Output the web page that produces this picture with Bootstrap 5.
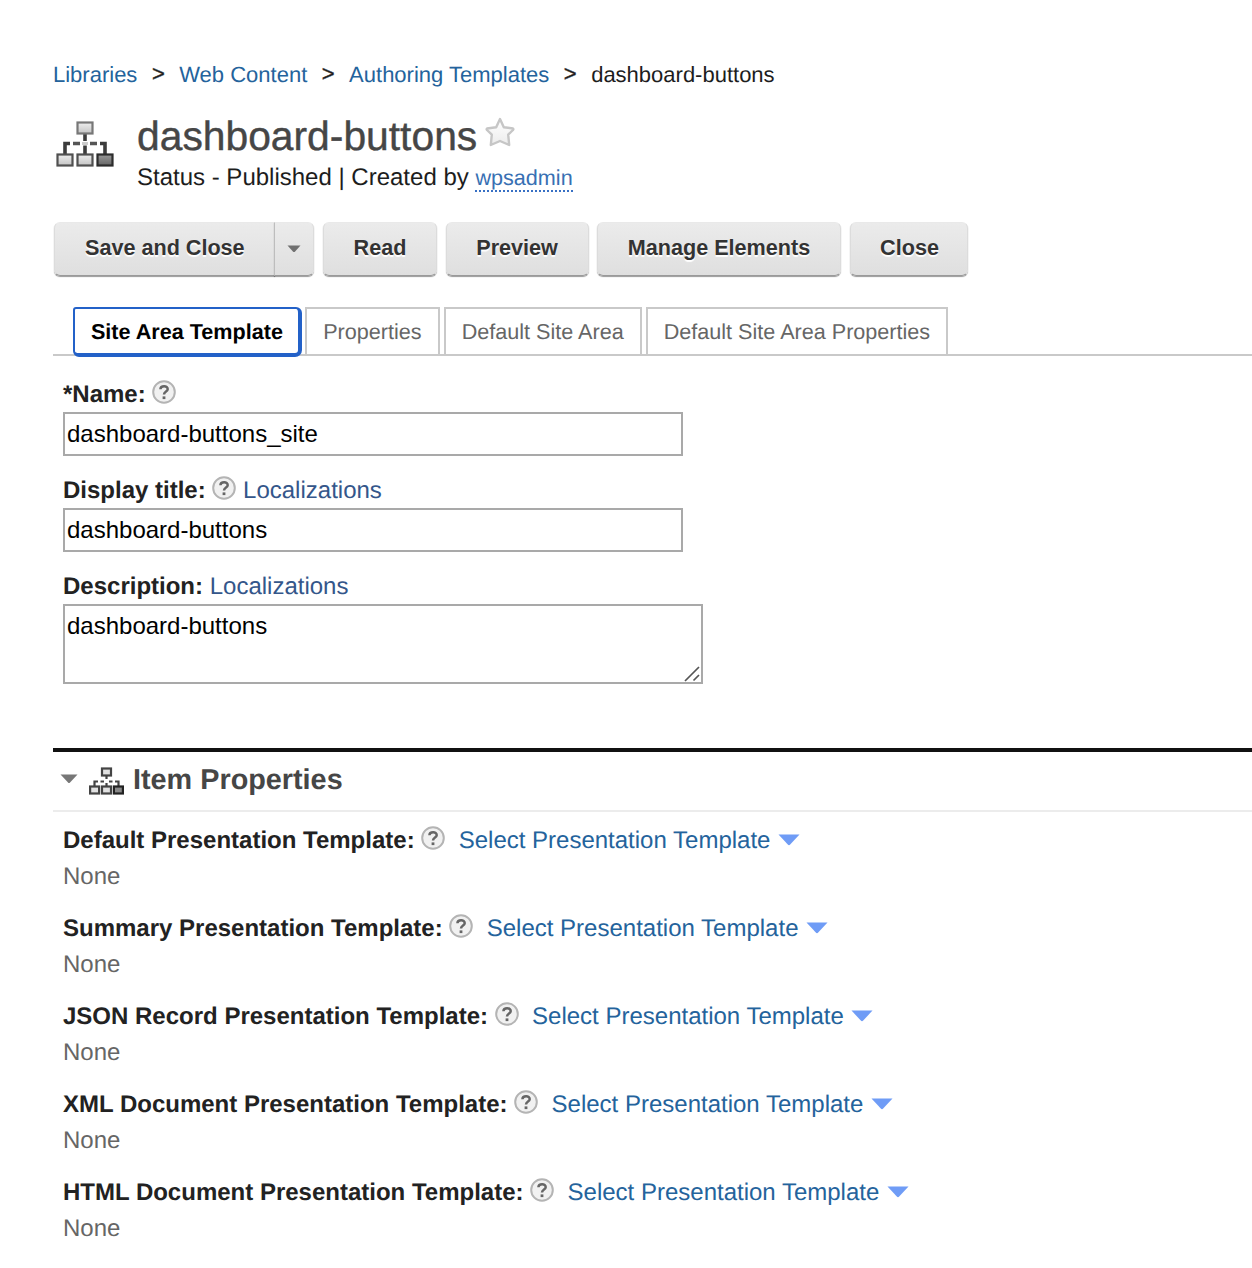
<!DOCTYPE html>
<html lang="en">
<head>
<meta charset="utf-8">
<meta name="viewport" content="width=device-width, initial-scale=1">
<title>dashboard-buttons</title>
<link href="https://cdn.jsdelivr.net/npm/bootstrap@5.3.0/dist/css/bootstrap.min.css" rel="stylesheet">
<style>
body{font-family:"Liberation Sans",Arial,sans-serif;font-size:24px;line-height:36px;color:#1d1d1d;background:#fff;text-rendering:geometricPrecision;overflow-x:hidden}
a{color:#24639c;text-decoration:none}
svg{display:block;flex:none}
.page-body{padding:61px 0 0 53px}
.crumbs{--bs-breadcrumb-divider:'>';font-size:22px;line-height:28px;margin:0;flex-wrap:nowrap}
.crumbs .breadcrumb-item+.breadcrumb-item{padding-left:14.5px}
.crumbs .breadcrumb-item+.breadcrumb-item::before{padding-right:14.5px;color:#1d1d1d;position:relative;top:-1px;-webkit-text-stroke:.4px #1d1d1d}
.crumbs .breadcrumb-item.active{color:#1d1d1d}
.item-head{padding-top:22px}
.item-icon{margin:10px 23px 0 3px}
.item-title{font-size:40.8px;line-height:50px;font-weight:400;color:#464646;-webkit-text-stroke:.4px #464646;margin:0}
.star{margin:-9px 0 0 7px}
.item-status{line-height:30px;margin-top:2px}
.author{font-size:21.6px;color:#3870b3;border-bottom:2px dotted #3870c4}
.toolbar{padding:29px 0 0 1px;gap:8.7px}
.tool{font-size:21.6px;font-weight:700;line-height:26px;color:#333;padding:12px 29.6px 14px;border:1px solid #dcdcdc;border-top-color:#e9e9e9;border-bottom-color:#9a9a9a;border-radius:6px;background:linear-gradient(#ebebeb,#dfdfdf);box-shadow:0 1px 1px rgba(0,0,0,.4);text-shadow:0 2px 1px #fff;white-space:nowrap}
.tool:last-child{padding-right:28.4px}
.split-group .tool:first-child{padding-left:30px;padding-right:30.4px;border-right:0}
.split-group .tool.arrow{padding:0 12px 0 12.3px;border-left:1px solid #bdbdbd;margin-left:0}
.tabs{margin-top:31px;padding-left:20px;height:49px;border-bottom:2px solid #c9c9c9;font-size:21.6px;line-height:44px;flex-wrap:nowrap;gap:4px}
.tabs .nav-link{height:49px;padding:1px 16px 0;border:2px solid #c9c9c9;border-radius:0;color:#666;background:#fff;white-space:nowrap}
.tabs .nav-link.active{height:50px;border:2px solid #2361c8;border-right-width:4px;border-bottom-width:4px;border-radius:3px 6px 7px 6px;color:#000;font-weight:700;padding:1px 15.5px 0 15.9px;margin-right:-1.2px}
.fields{padding:20px 0 0 10px}
.label-row{height:36px;padding-top:2px;gap:6.7px;white-space:nowrap}
.label-row strong{color:#222}
.label-row svg.help{margin-top:-6px}
.loc{color:#34568a}
.box-in{font-size:24px;line-height:30px;color:#000;border:2px solid #a9a9a9;border-radius:0;padding:5px 2px;width:620px;height:44px;display:block}
.field{height:96px}
.area-wrap{width:640px;height:80px}
textarea.box-in{width:640px;height:80px;resize:none;overflow:hidden;padding-top:5px}
.grip{right:3px;bottom:2px}
.section-bar{margin-top:64px;border-top:4px solid #111;border-bottom:2px solid #ececec;height:64px}
.section-bar h2{font-size:28.8px;font-weight:700;line-height:36px;color:#464646;margin:0 0 2px 9px}
.section-caret{margin:-5px 11px 0 7px}
.props{padding:10px 0 0 10px}
.prop{height:88px}
.none-text{color:#666;margin-top:1px}
.label-row .pick{margin-left:6.7px}
.label-row svg.down{margin:-2px 0 0 .6px}
</style>
</head>
<body>
<svg width="0" height="0" class="position-absolute">
 <defs>
  <linearGradient id="lightBox" x1="0" y1="0" x2="0" y2="1"><stop offset="0" stop-color="#eee"/><stop offset="1" stop-color="#c4c4c4"/></linearGradient>
  <linearGradient id="darkBox" x1="0" y1="0" x2="0" y2="1"><stop offset="0" stop-color="#999"/><stop offset="1" stop-color="#666"/></linearGradient>
  <linearGradient id="starFill" x1="0" y1="0" x2="0" y2="1"><stop offset="0" stop-color="#fff"/><stop offset="1" stop-color="#ececec"/></linearGradient>
  <symbol id="help" viewBox="0 0 24 24"><circle cx="12" cy="12" r="10.8" fill="#f1f1f1" stroke="#b4b4b4" stroke-width="2"/><path d="M8.4 9.2C8.6 5.2 15.9 5.2 15.7 9.3C15.6 11.6 12 11.5 12 14.5" fill="none" stroke="#666" stroke-width="2.5"/><rect x="10.6" y="16.4" width="2.8" height="2.7" fill="#666"/></symbol>
  <symbol id="down" viewBox="0 0 22 12"><path d="M0.5 .5H21.5L12.2 10.6Q11 11.8 9.8 10.6Z" fill="#6f9cf6"/></symbol>
 </defs>
</svg>
<main class="page-body">
 <nav><ol class="breadcrumb crumbs">
  <li class="breadcrumb-item"><a href="#">Libraries</a></li>
  <li class="breadcrumb-item"><a href="#">Web Content</a></li>
  <li class="breadcrumb-item"><a href="#">Authoring Templates</a></li>
  <li class="breadcrumb-item active">dashboard-buttons</li>
 </ol></nav>
 <header class="item-head d-flex">
  <svg class="item-icon" width="58" height="46" viewBox="0 0 58 46"><path d="M29 12V20M29 24.5V33M9 33V22.5H14M49 33V22.5H44" fill="none" stroke="#3c3c3c" stroke-width="3.6"/><path d="M17 22.5H24M34 22.5H41" stroke="#555" stroke-width="3.6"/><path d="M26 22.5H32" stroke="#ccc" stroke-width="3"/><g fill="url(#lightBox)" stroke="#505050" stroke-width="2.2"><rect x="21.5" y="1.5" width="15" height="11" stroke="#777"/><rect x="1.5" y="33.5" width="15" height="11"/><rect x="21.5" y="33.5" width="15" height="11"/><rect x="41.5" y="33.5" width="15" height="11" fill="url(#darkBox)" stroke="#2c2c2c"/></g></svg>
  <div>
   <div class="d-flex align-items-center"><h1 class="item-title">dashboard-buttons</h1>
    <svg class="star" width="32" height="32" viewBox="0 0 32 32"><path d="M16 3L19.8 11.2L29 12.5Q29.8 13.3 29 14L24.2 18.6L25.2 29L16 25L6.8 29L7.8 18.6L3 14Q2.2 13.3 3 12.5L12.2 11.2Z" fill="url(#starFill)" stroke="#c6c6c6" stroke-width="2.4" stroke-linejoin="round"/></svg></div>
   <div class="item-status">Status - Published | Created by <a class="author" href="#">wpsadmin</a></div>
  </div>
 </header>
 <div class="toolbar d-flex">
  <div class="btn-group split-group"><button class="btn tool">Save and Close</button><button class="btn tool arrow" aria-label="More"><svg width="14" height="8" viewBox="0 0 13 8"><path d="M0 .5H13L7.6 6.5Q6.5 7.6 5.4 6.5Z" fill="#707070"/></svg></button></div>
  <button class="btn tool">Read</button><button class="btn tool">Preview</button><button class="btn tool">Manage Elements</button><button class="btn tool">Close</button>
 </div>
 <nav class="nav tabs">
  <a class="nav-link active" href="#">Site Area Template</a><a class="nav-link" href="#">Properties</a><a class="nav-link" href="#">Default Site Area</a><a class="nav-link" href="#">Default Site Area Properties</a>
 </nav>
 <form class="fields">
  <div class="field"><div class="label-row d-flex align-items-center"><strong>*Name:</strong><svg class="help" width="24" height="24"><use href="#help"/></svg></div><input class="box-in" value="dashboard-buttons_site"></div>
  <div class="field"><div class="label-row d-flex align-items-center"><strong>Display title:</strong><svg class="help" width="24" height="24"><use href="#help"/></svg><a class="loc" href="#">Localizations</a></div><input class="box-in" value="dashboard-buttons"></div>
  <div class="label-row d-flex align-items-center"><strong>Description:</strong><a class="loc" href="#">Localizations</a></div>
  <div class="area-wrap position-relative"><textarea class="box-in">dashboard-buttons</textarea><svg class="grip position-absolute" width="16" height="16" viewBox="0 0 16 16"><path d="M1 15L15 1M9.5 14.5L15 9" stroke="#555" stroke-width="1.7"/></svg></div>
 </form>
 <section>
  <div class="section-bar d-flex align-items-center">
   <svg class="section-caret" width="18" height="10" viewBox="0 0 18 10"><path d="M0.5 .5H17.5L10 8.5Q9 9.5 8 8.5Z" fill="#777"/></svg>
   <svg width="35" height="28" viewBox="0 0 35 28"><path d="M17.5 9V12M17.5 16V20M5.5 20V14.5H9M11.5 14.5H15M20 14.5H23.5M26 14.5H29.5V20" fill="none" stroke="#444" stroke-width="2.2"/><g fill="#e2e2e2" stroke="#444" stroke-width="2.2"><rect x="13" y="1.5" width="9" height="7"/><rect x="1.1" y="19.5" width="9" height="7"/><rect x="13" y="19.5" width="9" height="7"/><rect x="24.9" y="19.5" width="9" height="7" fill="#888" stroke="#222"/></g></svg>
   <h2>Item Properties</h2>
  </div>
  <div class="props">
   <div class="prop"><div class="label-row d-flex align-items-center"><strong>Default Presentation Template:</strong><svg class="help" width="24" height="24"><use href="#help"/></svg><a class="pick" href="#">Select Presentation Template</a><svg class="down" width="22" height="12"><use href="#down"/></svg></div><div class="none-text">None</div></div>
   <div class="prop"><div class="label-row d-flex align-items-center"><strong>Summary Presentation Template:</strong><svg class="help" width="24" height="24"><use href="#help"/></svg><a class="pick" href="#">Select Presentation Template</a><svg class="down" width="22" height="12"><use href="#down"/></svg></div><div class="none-text">None</div></div>
   <div class="prop"><div class="label-row d-flex align-items-center"><strong>JSON Record Presentation Template:</strong><svg class="help" width="24" height="24"><use href="#help"/></svg><a class="pick" href="#">Select Presentation Template</a><svg class="down" width="22" height="12"><use href="#down"/></svg></div><div class="none-text">None</div></div>
   <div class="prop"><div class="label-row d-flex align-items-center"><strong>XML Document Presentation Template:</strong><svg class="help" width="24" height="24"><use href="#help"/></svg><a class="pick" href="#">Select Presentation Template</a><svg class="down" width="22" height="12"><use href="#down"/></svg></div><div class="none-text">None</div></div>
   <div class="prop"><div class="label-row d-flex align-items-center"><strong>HTML Document Presentation Template:</strong><svg class="help" width="24" height="24"><use href="#help"/></svg><a class="pick" href="#">Select Presentation Template</a><svg class="down" width="22" height="12"><use href="#down"/></svg></div><div class="none-text">None</div></div>
  </div>
 </section>
</main>
<script src="https://cdn.jsdelivr.net/npm/bootstrap@5.3.0/dist/js/bootstrap.bundle.min.js"></script>
</body>
</html>
